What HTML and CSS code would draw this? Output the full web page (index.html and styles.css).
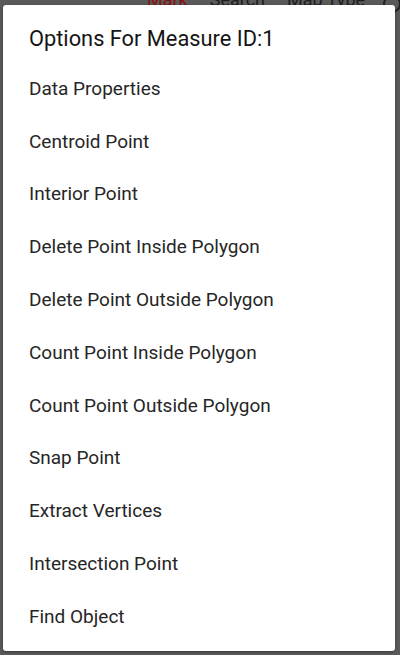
FILE: index.html
```html
<!DOCTYPE html>
<html>
<head>
<meta charset="utf-8">
<link rel="stylesheet" href="styles.css">
</head>
<body>
<div class="backdrop">
  <div class="behind">
    <span class="tab tab-red">Mark</span>
    <span class="tab">Search</span>
    <span class="tab">Map Type</span>
    <span class="tab-circle"></span>
  </div>
  <div class="dialog">
    <div class="title">Options For Measure ID:1</div>
    <ul class="items">
      <li>Data Properties</li>
      <li>Centroid Point</li>
      <li>Interior Point</li>
      <li>Delete Point Inside Polygon</li>
      <li>Delete Point Outside Polygon</li>
      <li>Count Point Inside Polygon</li>
      <li>Count Point Outside Polygon</li>
      <li>Snap Point</li>
      <li>Extract Vertices</li>
      <li>Intersection Point</li>
      <li>Find Object</li>
    </ul>
  </div>
</div>
</body>
</html>
```
FILE: styles.css
```css
html, body {
  margin: 0;
  padding: 0;
}
body {
  width: 400px;
  height: 655px;
  overflow: hidden;
  background: #5a5a5a;
  font-family: Roboto, "Noto Sans", sans-serif;
}
.backdrop {
  position: relative;
  width: 400px;
  height: 655px;
  padding: 5px 5px 0 3px;
  box-sizing: border-box;
}
.behind {
  position: absolute;
  top: -11px;
  left: 147px;
  display: flex;
  gap: 22px;
  font-size: 18px;
  color: #1e1e1e;
}
.tab-red {
  color: #8a1010;
}
.tab-circle {
  position: absolute;
  left: 236px;
  top: 6px;
  width: 14px;
  height: 14px;
  border: 2px solid #222;
  border-radius: 50%;
}
.dialog {
  position: relative;
  background: #ffffff;
  border-radius: 3px;
  height: 646px;
  box-shadow: 0 1px 3px rgba(0,0,0,0.4);
}
.title {
  height: 57px;
  padding-left: 26px;
  box-sizing: border-box;
  padding-top: 21px;
  font-size: 21.8px;
  line-height: 26px;
  color: #151515;
}
.items {
  list-style: none;
  margin: 0;
  padding: 0;
}
.items li {
  height: 52.8px;
  display: flex;
  align-items: center;
  padding-left: 26px;
  font-size: 19px;
  color: #262626;
}
```
